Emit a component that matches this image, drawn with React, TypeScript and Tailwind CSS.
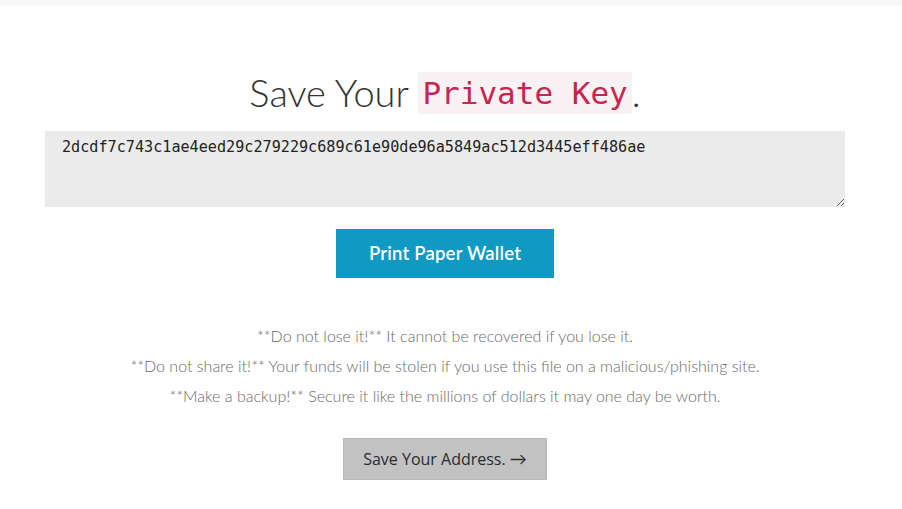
import React from "react";

export default function App() {
  const key = "2dcdf7c743c1ae4eed29c279229c689c61e90de96a5849ac512d3445eff486ae";
  return (
    <div className="min-h-[509px] w-[902px] bg-white" style={{ fontFamily: "Lato, 'Open Sans', sans-serif" }}>
      <div className="h-[5px] bg-[#f8f8f8]" />
      <div className="w-[890px] flex flex-col items-center">
        <h1 className="mt-[67px] text-[38px] leading-[42px] font-light text-[#333] flex items-center">
          <span className="relative top-[-1px]">Save Your&nbsp;</span>
          <code
            className="bg-[#f9f2f4] text-[#c7254e] text-[31px] leading-[42px] px-[4px] rounded-[2px]"
            style={{ fontFamily: "'DejaVu Sans Mono', 'Liberation Mono', monospace" }}
          >
            Private Key
          </code>
          <span className="relative top-[-1px]">.</span>
        </h1>
        <textarea
          readOnly
          defaultValue={key}
          className="mt-[17px] w-[800px] h-[76px] bg-[#ebebeb] border-0 outline-none pl-[17px] pr-4 pt-[6px] text-[15.15px] leading-[20px] text-[#222]"
          style={{ fontFamily: "'DejaVu Sans Mono', 'Liberation Mono', monospace" }}
        />
        <button className="mt-[22px] w-[218px] h-[49px] bg-[#0f99c3] text-white text-[18.5px] font-semibold tracking-[0.2px]">
          Print Paper Wallet
        </button>
        <div className="mt-[43px] flex flex-col items-center text-[16px] font-light text-[#6a6a6a] leading-[30px]">
          <p>**Do not lose it!** It cannot be recovered if you lose it.</p>
          <p>**Do not share it!** Your funds will be stolen if you use this file on a malicious/phishing site.</p>
          <p>**Make a backup!** Secure it like the millions of dollars it may one day be worth.</p>
        </div>
        <button
          className="mt-[27px] w-[204px] h-[42px] bg-[#c2c2c2] border border-[#b8b8b8] text-[#2a2a33] text-[16px] font-normal"
          style={{ fontFamily: "'Open Sans', sans-serif" }}
        >
          Save Your Address.{" "}
          <span className="text-[17px]" style={{ fontFamily: "Lato, sans-serif" }}>→</span>
        </button>
      </div>
    </div>
  );
}
